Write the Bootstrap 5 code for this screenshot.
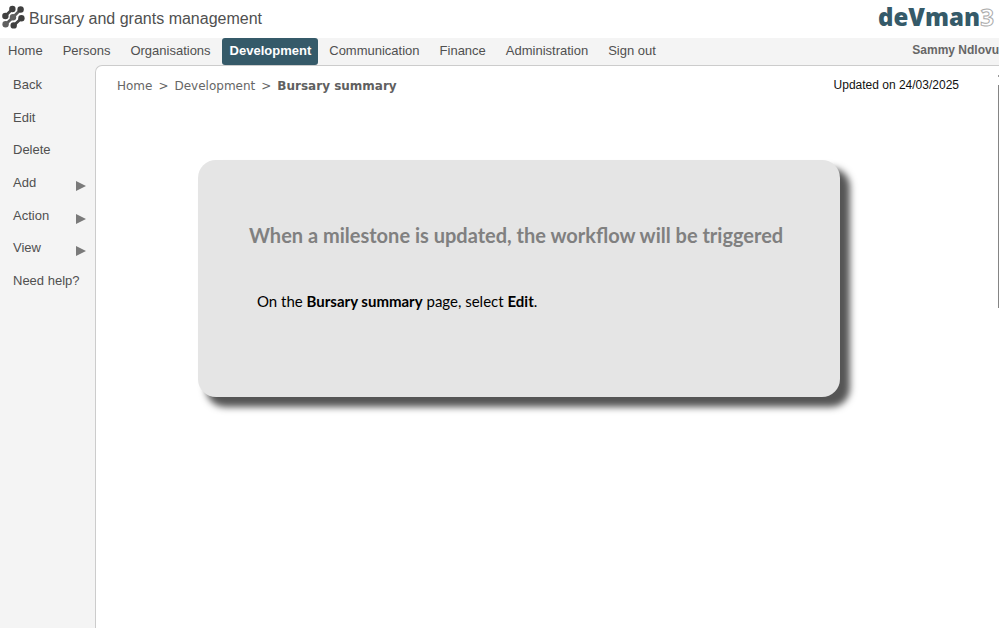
<!DOCTYPE html>
<html lang="en">
<head>
<meta charset="utf-8">
<meta name="viewport" content="width=device-width, initial-scale=1">
<title>Bursary and grants management</title>
<link href="https://cdn.jsdelivr.net/npm/bootstrap@5.3.0/dist/css/bootstrap.min.css" rel="stylesheet">
<style>
body { font-family: "Liberation Sans", Arial, sans-serif; font-size: 13px; line-height: 18px; color: #505050; background: #fff; }
a, a:hover { color: inherit; text-decoration: none; }
.app-header { height: 38px; padding: 0 4px 2px 2px; }
.app-title { font-size: 16px; line-height: 24px; padding: 2px 0 0 1px; }
.brand { font-family: "Open Sans", sans-serif; }
.top-nav { background: #f4f4f4; }
.top-nav .nav { gap: 2px; }
.top-nav .nav-link { padding: 4px 9px 5px; font-size: 13px; line-height: 18px; color: #505050; }
.top-nav .nav-link:first-child { padding-left: 8px; }
.top-nav .nav-link.active { padding-left: 8px; padding-right: 7px; background: #355a69; color: #fff; border-radius: 3px; font-weight: 700; }
.user-name { font-size: 12px; font-weight: 700; color: #666; padding: 3px 0 0 0; }
.workspace { background: #f4f4f4; }
.side { width: 95px; }
.side-menu { min-height: 228px; margin-top: 4px; }
.side-menu a, .side-menu button { padding: 0 9px 0 13px; font-size: 13px; line-height: 18px; color: #505050; background: none; border: 0; text-align: left; }
.side-menu svg { margin-top: 6px; }
.panel { min-width: 0; background: #fff; border: solid #ccc; border-width: 1px 0 0 1px; border-top-left-radius: 7px; }
.panel-top { padding: 11px 39px 0 21px; }
.crumbs { font-family: "DejaVu Sans", Verdana, sans-serif; font-size: 12px; --bs-breadcrumb-divider: ">"; --bs-breadcrumb-item-padding-x: 6px; --bs-breadcrumb-divider-color: #666; color: #666; }
.crumbs .active { color: #606060; font-weight: 700; }
.crumbs .active::before { font-weight: 400; }
.updated { font-size: 12px; line-height: 16px; color: #111; }
.notice { max-width: 642px; min-height: 237px; margin: 65px 158px 0 102px; padding: 61px 51px; background: #e5e5e5; border-radius: 18px; box-shadow: 9px 9px 7px 1px #555; font-family: Lato, Calibri, sans-serif; }
.notice h1 { font-size: 20px; line-height: 28px; font-weight: 700; color: #808080; margin-bottom: 38px; }
.notice p { font-size: 15px; line-height: 28px; color: #000; margin: 0; padding-left: 8px; }
.scroll-rail { width: 1px; padding-top: 9px; }
.scroll-cap { height: 2px; background: #999; margin-bottom: 8px; }
.scroll-thumb { height: 223px; background: #858585; }
</style>
<script src="https://cdn.jsdelivr.net/npm/bootstrap@5.3.0/dist/js/bootstrap.bundle.min.js"></script>
</head>
<body class="d-flex flex-column min-vh-100">
<header class="app-header d-flex justify-content-between align-items-center">
  <div class="d-flex align-items-center">
    <svg width="26" height="28" viewBox="0 5 26 28" aria-hidden="true" stroke-linecap="round">
      <g stroke="#444" stroke-width="2.8"><path d="M3.2 17 10.5 10M11.7 26.6 19.4 19.2"/><path stroke="#5a5a5a" d="M3.5 25.5 11 18.2 18.6 10.5"/></g>
      <g fill="#3f3f3f"><circle cx="10.4" cy="10" r="3.2"/><circle cx="3.4" cy="17" r="3.2"/><circle cx="18.6" cy="10.5" r="3.2"/><circle cx="19.4" cy="19.2" r="3.2"/><circle cx="11.7" cy="26.4" r="3.2"/></g>
      <g fill="#606060"><circle cx="11" cy="18.2" r="3.2"/><circle cx="3.6" cy="25.3" r="3.2"/></g>
    </svg>
    <span class="app-title">Bursary and grants management</span>
  </div>
  <a href="#" aria-label="devman3">
    <svg class="brand d-block" width="118" height="36" viewBox="0 0 118 36" aria-hidden="true">
      <text x="1" y="26" font-size="24" font-weight="800" fill="#355a69">deVman</text>
      <text x="117" y="26" text-anchor="end" font-size="24" font-weight="700" fill="#fff" stroke="#aaa" stroke-width="1">3</text>
    </svg>
  </a>
</header>
<nav class="top-nav d-flex justify-content-between" aria-label="Main">
  <div class="nav">
    <a class="nav-link" href="#">Home</a>
    <a class="nav-link" href="#">Persons</a>
    <a class="nav-link" href="#">Organisations</a>
    <a class="nav-link active" href="#" aria-current="page">Development</a>
    <a class="nav-link" href="#">Communication</a>
    <a class="nav-link" href="#">Finance</a>
    <a class="nav-link" href="#">Administration</a>
    <a class="nav-link" href="#">Sign out</a>
  </div>
  <span class="user-name text-nowrap">Sammy Ndlovu</span>
</nav>
<div class="workspace d-flex flex-grow-1">
  <aside class="side flex-shrink-0">
    <nav class="side-menu d-flex flex-column" aria-label="Record">
      <a class="flex-fill d-flex align-items-center" href="#">Back</a>
      <a class="flex-fill d-flex align-items-center" href="#">Edit</a>
      <a class="flex-fill d-flex align-items-center" href="#">Delete</a>
      <button type="button" class="flex-fill d-flex align-items-center justify-content-between">Add <svg width="10" height="12" aria-hidden="true"><path d="M0 1v10l10-5z" fill="#7a7a7a"/></svg></button>
      <button type="button" class="flex-fill d-flex align-items-center justify-content-between">Action <svg width="10" height="12" aria-hidden="true"><path d="M0 1v10l10-5z" fill="#7a7a7a"/></svg></button>
      <button type="button" class="flex-fill d-flex align-items-center justify-content-between">View <svg width="10" height="12" aria-hidden="true"><path d="M0 1v10l10-5z" fill="#7a7a7a"/></svg></button>
      <a class="flex-fill d-flex align-items-center text-nowrap" href="#">Need help?</a>
    </nav>
  </aside>
  <main class="panel flex-grow-1 d-flex">
    <div class="flex-grow-1">
      <div class="panel-top d-flex justify-content-between">
        <nav aria-label="Breadcrumb">
          <ol class="breadcrumb crumbs mb-0">
            <li class="breadcrumb-item"><a href="#">Home</a></li>
            <li class="breadcrumb-item"><a href="#">Development</a></li>
            <li class="breadcrumb-item active" aria-current="page">Bursary summary</li>
          </ol>
        </nav>
        <span class="updated">Updated on 24/03/2025</span>
      </div>
      <section class="notice">
        <h1>When a milestone is updated, the workflow will be triggered</h1>
        <p>On the <strong>Bursary summary</strong> page, select <strong>Edit</strong>.</p>
      </section>
    </div>
    <div class="scroll-rail flex-shrink-0" aria-hidden="true">
      <div class="scroll-cap"></div>
      <div class="scroll-thumb"></div>
    </div>
  </main>
</div>
</body>
</html>
